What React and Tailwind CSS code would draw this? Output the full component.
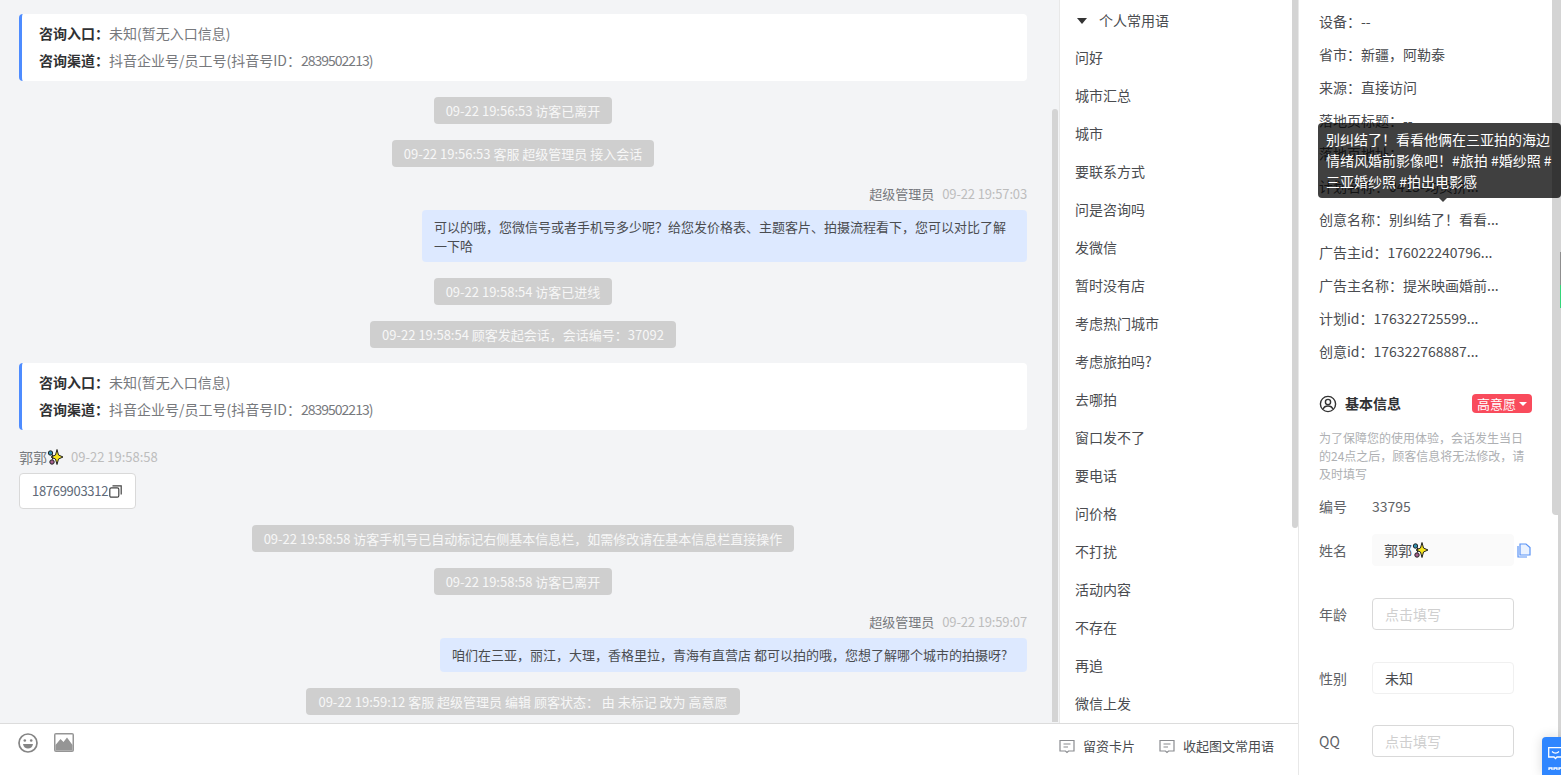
import React from 'react';

const FONT = 'font-["Microsoft_YaHei","Noto_Sans_CJK_SC",sans-serif]';

const phrases = ['问好', '城市汇总', '城市', '要联系方式', '问是咨询吗', '发微信', '暂时没有店', '考虑热门城市', '考虑旅拍吗?', '去哪拍', '窗口发不了', '要电话', '问价格', '不打扰', '活动内容', '不存在', '再追', '微信上发'];

const infoRows = [
  '设备：--',
  '省市：新疆，阿勒泰',
  '来源：直接访问',
  '落地页标题：--',
  '落地页地址：',
  '计划名称：0415-均页拼...',
  '创意名称：别纠结了！看看...',
  '广告主id：176022240796...',
  '广告主名称：提米映画婚前...',
  '计划id：176322725599...',
  '创意id：176322768887...',
];

const Sparkle = () => (
  <svg width="16" height="16" viewBox="0 0 16 16" className="inline-block">
    <circle cx="3.5" cy="4" r="2.2" fill="#2f8fb0" stroke="#222" strokeWidth="1" />
    <circle cx="5" cy="13" r="2.2" fill="#a8608f" stroke="#222" strokeWidth="1" />
    <path d="M5 5 L8 8 L5 11 Z" fill="#222" />
    <path d="M10 0.5 L11.5 6 L16 8 L11.5 10 L10 15.5 L8.5 10 L4 8 L8.5 6 Z" fill="#f7e51c" stroke="#222" strokeWidth="1" />
  </svg>
);

const SysMsg = ({ children }) => (
  <div className="flex justify-center">
    <div className="h-[27px] px-3 rounded-sm bg-[#cfcfcf] text-[#f7f7f7] text-[13px] leading-[27px] whitespace-nowrap">{children}</div>
  </div>
);

const EntryCard = () => (
  <div className="h-[67px] bg-white rounded-sm border-l-[3px] border-[#4e8cff] pl-[17px] pt-[6px] text-[14px] leading-[27px]">
    <div><span className="font-bold text-[#303133]">咨询入口：</span><span className="text-[#77797d]">未知(暂无入口信息)</span></div>
    <div>
      <span className="font-bold text-[#303133]">咨询渠道：</span>
      <span className="text-[#77797d]">抖音企业号/员工号(抖音号ID：<span className="tracking-[-1px]">2839502213</span>)</span>
    </div>
  </div>
);

const AgentMsg = ({ time, className, children }) => (
  <div className="flex flex-col items-end">
    <div className="text-[13px] leading-[20px] text-[#77797d]">
      超级管理员<span className="ml-2 tracking-[-0.15px] text-[#bdbdbd]">{time}</span>
    </div>
    <div className={`mt-[6px] rounded-sm bg-[#dde9ff] px-3 py-[7px] text-[13px] text-[#4a4c50] ${className}`}>{children}</div>
  </div>
);

const NoteIcon = () => (
  <svg width="16" height="15" viewBox="0 0 16 15" fill="none" stroke="#8a8c90" strokeWidth="1.2">
    <path d="M1 1.5 H15 V12 H9.5 L8 13.5 L6.5 12 H1 Z" />
    <path d="M4.5 5 H11.5 M4.5 8 H9" />
  </svg>
);

const Field = ({ label, value, placeholder }) => (
  <div className="flex items-center h-[32px]">
    <span className="w-[53px] text-[#606266]">{label}</span>
    <div className={`w-[142px] h-[32px] rounded-sm border px-3 leading-[30px] ${value ? 'border-[#f0f0f0] text-[#4a4c50]' : 'border-[#d9d9d9] text-[#cfcfcf]'}`}>
      {value || placeholder}
    </div>
  </div>
);

export default function App() {
  return (
    <div className={`${FONT} relative flex h-[775px] w-[1561px] overflow-hidden bg-white`}>
      {/* chat column */}
      <div className="flex w-[1298px] shrink-0 flex-col">
        <div className="flex h-[724px] shrink-0 border-b border-[#dcdcdc]">
          <div className="flex w-[1059px] shrink-0 bg-[#f3f4f6]">
            <div className="flex w-[1008px] ml-[19px] flex-col pt-[14px] overflow-hidden">
              <EntryCard />
              <div className="mt-[16px]"><SysMsg>09-22 19:56:53 访客已离开</SysMsg></div>
              <div className="mt-[16px]"><SysMsg>09-22 19:56:53 客服 超级管理员 接入会话</SysMsg></div>
              <div className="mt-[17px]">
                <AgentMsg time="09-22 19:57:03" className="w-[605px] leading-[19px]">可以的哦，您微信号或者手机号多少呢？给您发价格表、主题客片、拍摄流程看下，您可以对比了解一下哈</AgentMsg>
              </div>
              <div className="mt-[16px]"><SysMsg>09-22 19:58:54 访客已进线</SysMsg></div>
              <div className="mt-[16px]"><SysMsg>09-22 19:58:54 顾客发起会话，会话编号：37092</SysMsg></div>
              <div className="mt-[15px]"><EntryCard /></div>
              <div className="mt-[17px] text-[14px] leading-[20px] text-[#77797d] flex items-center">
                郭郭<Sparkle /><span className="ml-2 text-[13px] text-[#bdbdbd]">09-22 19:58:58</span>
              </div>
              <div className="mt-[6px] flex h-[36px] w-[117px] items-center rounded-[4px] border border-[#d9d9d9] bg-white pl-[12px] text-[13px] text-[#606a78]">
                <span className="tracking-[-0.3px]">18769903312</span>
                <svg width="13" height="13" viewBox="0 0 13 13" fill="none" stroke="#444" strokeWidth="1.2" className="ml-[1px]">
                  <rect x="0.8" y="2.8" width="9" height="9.4" rx="1.5" />
                  <path d="M3.5 0.8 H12.2 V9.5" />
                </svg>
              </div>
              <div className="mt-[16px]"><SysMsg>09-22 19:58:58 访客手机号已自动标记右侧基本信息栏，如需修改请在基本信息栏直接操作</SysMsg></div>
              <div className="mt-[16px]"><SysMsg>09-22 19:58:58 访客已离开</SysMsg></div>
              <div className="mt-[17px]">
                <AgentMsg time="09-22 19:59:07" className="w-[587px] leading-[20px]">咱们在三亚，丽江，大理，香格里拉，青海有直营店 都可以拍的哦，您想了解哪个城市的拍摄呀?</AgentMsg>
              </div>
              <div className="mt-[16px]"><SysMsg>09-22 19:59:12 客服 超级管理员 编辑 顾客状态： 由 未标记 改为 高意愿</SysMsg></div>
            </div>
            <div className="ml-[25px] w-[6px] pt-[109px] pb-[1px]">
              <div className="h-full w-[6px] rounded-t bg-[#d4d4d4]" />
            </div>
          </div>
          <div className="relative w-[239px] shrink-0 border-l border-[#e8e8e8] bg-white">
            <div className="flex items-center h-[40px] pt-[1px] pl-[17px] text-[14px] text-[#4a4c50]">
              <span className="h-0 w-0 border-x-[5px] border-t-[6px] border-x-transparent border-t-[#333]" />
              <span className="ml-[12px]">个人常用语</span>
            </div>
            {phrases.map((p) => (
              <div key={p} className="h-[38px] pl-[15px] pt-[7px] text-[14px] leading-[20px] text-[#4a4c50]">{p}</div>
            ))}
            <div className="absolute right-0 top-0 h-[528px] w-[6px] rounded-b bg-[#d4d4d4]" />
          </div>
        </div>
        <div className="flex flex-1 bg-white">
          <div className="flex w-[1059px] shrink-0 items-start pl-[18px] pt-[9px]">
            <svg width="20" height="20" viewBox="0 0 20 20" fill="none">
              <circle cx="10" cy="10" r="9" stroke="#858585" strokeWidth="1.7" />
              <circle cx="6.8" cy="7.5" r="1.3" fill="#858585" />
              <circle cx="13.2" cy="7.5" r="1.3" fill="#858585" />
              <path d="M5 11 H15 C14.5 14 12.5 15.5 10 15.5 C7.5 15.5 5.5 14 5 11 Z" fill="#858585" />
            </svg>
            <svg width="20" height="19" viewBox="0 0 20 19" className="ml-[16px]">
              <rect x="0" y="0" width="20" height="19" rx="2" fill="#959595" />
              <rect x="1.5" y="1.5" width="17" height="16" fill="white" />
              <path d="M1.5 12 L6.5 6 L9.5 9 L13 4.5 L18.5 12 V17.5 H1.5 Z" fill="#959595" />
            </svg>
          </div>
          <div className="flex h-[44px] flex-1 items-center text-[13px] text-[#4a4c50]">
            <NoteIcon /><span className="ml-[8px]">留资卡片</span>
            <span className="ml-[24px]"><NoteIcon /></span><span className="ml-[8px]">收起图文常用语</span>
          </div>
        </div>
      </div>

      {/* right info column */}
      <div className="relative w-[263px] shrink-0 border-l border-[#e8e8e8] pl-[20px] text-[14px] text-[#4a4c50]">
        <div className="pt-[11px]">
          {infoRows.map((r) => (
            <div key={r} className="h-[33px] leading-[20px] whitespace-nowrap">{r}</div>
          ))}
        </div>
        <div className="mt-[19px] flex items-center w-[213px]">
          <svg width="18" height="18" viewBox="0 0 18 18" fill="none" stroke="#333" strokeWidth="1.4">
            <circle cx="9" cy="9" r="7.6" />
            <circle cx="9" cy="7" r="2.6" />
            <path d="M4.2 14 C5 11.6 7 11 9 11 C11 11 13 11.6 13.8 14" />
          </svg>
          <span className="ml-[8px] font-bold text-[#303133]">基本信息</span>
          <span className="ml-auto flex h-[19px] w-[60px] items-center justify-center rounded-sm bg-[#f94b5c] text-[13px] text-white">
            高意愿<span className="ml-[3px] h-0 w-0 border-x-[4px] border-t-[4px] border-x-transparent border-t-white" />
          </span>
        </div>
        <div className="mt-[15px] w-[210px] text-[12px] leading-[18px] text-[#aeb0b3]">为了保障您的使用体验，会话发生当日的24点之后，顾客信息将无法修改，请及时填写</div>
        <div className="mt-[7px] flex h-[32px] items-center">
          <span className="w-[53px] text-[#606266]">编号</span>
          <span className="text-[#606266]">33795</span>
        </div>
        <div className="mt-[12px] flex h-[32px] items-center">
          <span className="w-[53px] text-[#606266]">姓名</span>
          <div className="flex h-[32px] w-[142px] items-center rounded-sm bg-[#fafafa] pl-[12px]">郭郭<Sparkle /></div>
          <svg width="14" height="15" viewBox="0 0 14 15" fill="none" stroke="#5a93f5" strokeWidth="1.2" className="ml-[3px]">
            <path d="M3 1 H9 L13 4.5 V12 H3 Z" fill="#eaf2ff" />
            <path d="M1 3 V14 H10" />
          </svg>
        </div>
        <div className="mt-[32px]"><Field label="年龄" placeholder="点击填写" /></div>
        <div className="mt-[32px]"><Field label="性别" value="未知" /></div>
        <div className="mt-[31px]"><Field label="QQ" placeholder="点击填写" /></div>
        <div className="absolute right-0 top-0 h-[737px] w-[3px] bg-[#d4d4d4]" />
        <div className="absolute right-0 top-0 h-[515px] w-[9px] rounded-bl bg-[#d4d4d4]" />
        <div className="absolute right-0 top-[252px] h-[33px] w-[1px] bg-[#8f8f8f]" />
        <div className="absolute right-0 top-[285px] h-[23px] w-[1px] bg-[#35d67a]" />
      </div>

      {/* tooltip */}
      <div className="absolute left-[1318px] top-[123px] w-[243px] h-[75px] rounded-sm bg-black/75 pl-[8px] pt-[6px] text-[14px] leading-[21px] text-white">
        别纠结了！看看他俩在三亚拍的海边情绪风婚前影像吧！#旅拍 #婚纱照 #三亚婚纱照 #拍出电影感
        <span className="absolute left-[121px] top-[75px] h-0 w-0 border-x-[4px] border-t-[4px] border-x-transparent border-t-black/75" />
      </div>

      {/* floating widget */}
      <div className="absolute left-[1542px] top-[737px] h-[38px] w-[19px] overflow-hidden rounded-tl-[4px] bg-[#2f86ff] pl-[6px] pt-[10px] shadow-[0_0_12px_rgba(0,0,0,0.15)]">
        <svg width="16" height="24" viewBox="0 0 16 24" fill="none" stroke="white" strokeWidth="1.3">
          <path d="M0.7 0.7 H15.5 V10 H9 L7.5 11.5 L6 10 H0.7 Z" />
          <path d="M4 4.5 C6 6.5 9 6.5 11 4.5" />
          <path d="M1 23 V21 H4 V23 M6 23 V21 H9 V23 M11 23 V21 H14 V23" />
        </svg>
      </div>
    </div>
  );
}
